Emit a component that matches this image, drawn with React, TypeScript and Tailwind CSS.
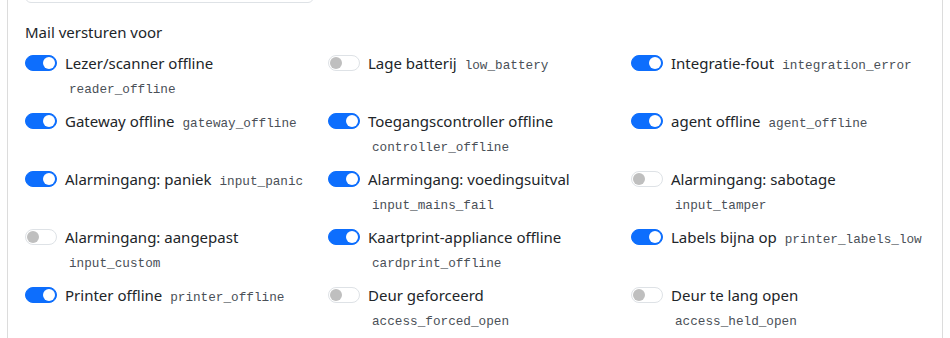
const items: { label: string; code: string; on: boolean }[] = [
  { label: "Lezer/scanner offline", code: "reader_offline", on: true },
  { label: "Lage batterij", code: "low_battery", on: false },
  { label: "Integratie-fout", code: "integration_error", on: true },
  { label: "Gateway offline", code: "gateway_offline", on: true },
  { label: "Toegangscontroller offline", code: "controller_offline", on: true },
  { label: "agent offline", code: "agent_offline", on: true },
  { label: "Alarmingang: paniek", code: "input_panic", on: true },
  { label: "Alarmingang: voedingsuitval", code: "input_mains_fail", on: true },
  { label: "Alarmingang: sabotage", code: "input_tamper", on: false },
  { label: "Alarmingang: aangepast", code: "input_custom", on: false },
  { label: "Kaartprint-appliance offline", code: "cardprint_offline", on: true },
  { label: "Labels bijna op", code: "printer_labels_low", on: true },
  { label: "Printer offline", code: "printer_offline", on: true },
  { label: "Deur geforceerd", code: "access_forced_open", on: false },
  { label: "Deur te lang open", code: "access_held_open", on: false },
];

function Switch({ on }: { on: boolean }) {
  return (
    <span
      className={`mt-1 flex h-4 w-8 shrink-0 items-center rounded-full border px-[1px] ${
        on ? "justify-end border-[#0d6efd] bg-[#0d6efd]" : "justify-start border-[#dee2e6] bg-white"
      }`}
    >
      <span className={`h-3 w-3 rounded-full ${on ? "bg-white" : "bg-[#bfbfbf]"}`} />
    </span>
  );
}

export default function App() {
  return (
    <div className="h-[338px] w-[950px] overflow-hidden bg-white font-['Noto_Sans',sans-serif] text-[15px] leading-6 text-[#212529]">
      <div className="ml-[7px] flow-root h-full w-[936px] border-x border-[#dcdcdc] pl-[17px] pr-[8px]">
        {/* bottom of the input above */}
        <div className="-mt-[36px] h-[39px] w-[289px] rounded-md border border-[#dee2e6]" />

        <div className="mt-[17px] mb-[7px]">Mail versturen voor</div>

        <div className="grid grid-cols-3">
          {items.map((it) => (
            <div key={it.code} className="mb-[10px] flex gap-2 pr-3">
              <Switch on={it.on} />
              <label>
                {it.label}{" "}
                <code className="ml-1 font-['Liberation_Mono',monospace] text-[12.7px] leading-none text-[#4a5057]">
                  {it.code}
                </code>
              </label>
            </div>
          ))}
        </div>
      </div>
    </div>
  );
}
